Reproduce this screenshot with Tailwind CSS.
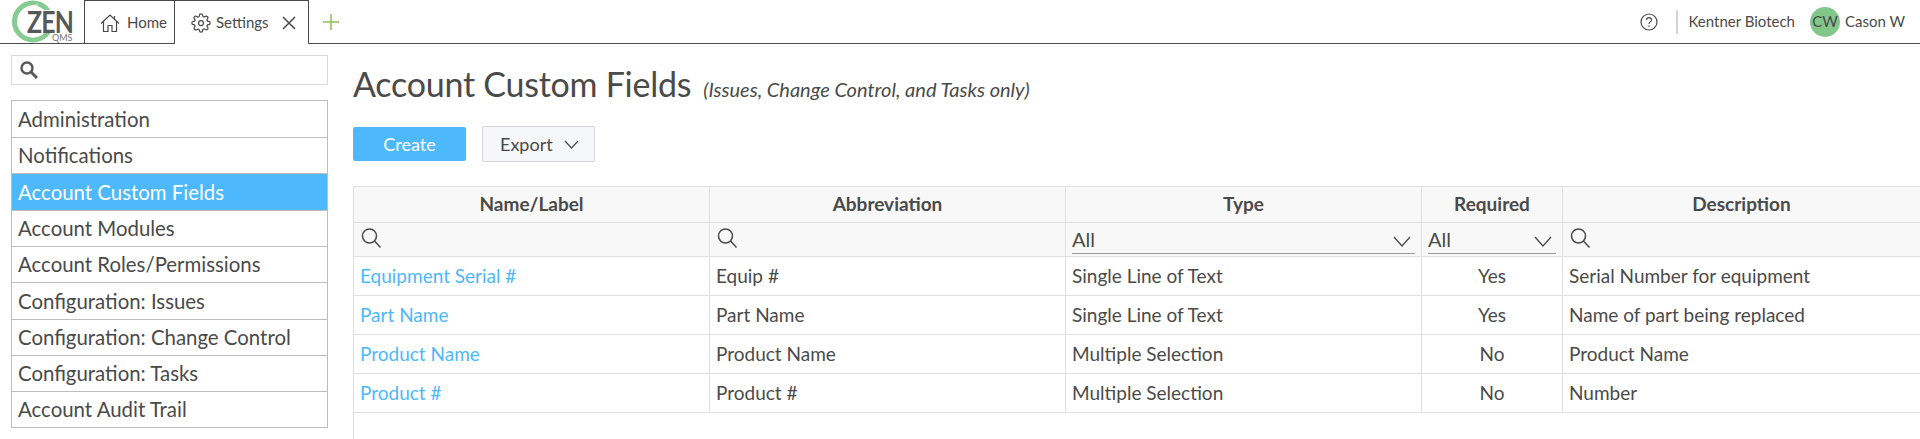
<!DOCTYPE html>
<html lang="en">
<head>
    <meta charset="UTF-8">
    <title>Account Custom Fields</title>
    <script src="https://cdn.jsdelivr.net/npm/@tailwindcss/browser@4"></script>
</head>
<body class="h-[439px] overflow-hidden bg-white font-['Lato',sans-serif] text-[#4a4a4a]">
    <!-- top bar -->
    <header class="flex h-[44px] items-stretch border-b border-[#4a4a4a]">
        <div class="relative w-[84px] shrink-0">
            <svg class="absolute left-[11px] top-0" width="44" height="43" viewBox="0 0 44 43" fill="none">
                <circle cx="22" cy="21.500" r="18.500" stroke="#86cb92" stroke-width="5"/>
                <path d="M7 26C5 14 15 5 27 5" stroke="#fff" stroke-width="1"/>
                <path d="M12 33c5 5 14 5 20 1" stroke="#fff" stroke-width="1"/>
            </svg>
            <span class="absolute left-[27px] top-[10px] h-[22px] origin-left scale-x-[0.8] bg-white text-[31px] leading-[22px] font-bold tracking-[-1px] text-[#55595a]">ZEN</span>
            <span class="absolute left-[52px] top-[33px] text-[9px] leading-[9px] text-[#777]">QMS</span>
        </div>
        <div class="flex h-[44px] w-[91px] items-center gap-[7px] border-x border-t border-[#4a4a4a] pl-[15px] text-[15px]">
            <svg width="20" height="20" viewBox="0 0 20 20" fill="none" stroke="#4a4a4a" stroke-width="1.200"><path d="M1 10.500 10 2l9 8.500M3.500 8.500V18.500h4.500v-6h4v6h4.500V8.500M14.500 3v3"/></svg>
            <span>Home</span>
        </div>
        <div class="flex h-[44px] w-[134px] items-center border-r border-t border-[#4a4a4a] bg-white pl-[16px] text-[15px]">
            <svg class="mr-[5px]" width="20" height="20" viewBox="0 0 24 24" fill="none" stroke="#4a4a4a" stroke-width="1.500" stroke-linejoin="round"><circle cx="12" cy="12" r="3"/><path d="M19.4 15a1.65 1.65 0 0 0 .33 1.82l.06.06a2 2 0 0 1 0 2.83 2 2 0 0 1-2.83 0l-.06-.06a1.65 1.65 0 0 0-1.82-.33 1.65 1.65 0 0 0-1 1.51V21a2 2 0 0 1-2 2 2 2 0 0 1-2-2v-.09A1.65 1.65 0 0 0 9 19.4a1.65 1.65 0 0 0-1.82.33l-.06.06a2 2 0 0 1-2.83 0 2 2 0 0 1 0-2.83l.06-.06a1.65 1.65 0 0 0 .33-1.82 1.65 1.65 0 0 0-1.51-1H3a2 2 0 0 1-2-2 2 2 0 0 1 2-2h.09A1.65 1.65 0 0 0 4.6 9a1.65 1.65 0 0 0-.33-1.82l-.06-.06a2 2 0 0 1 0-2.83 2 2 0 0 1 2.83 0l.06.06a1.65 1.65 0 0 0 1.82.33H9a1.65 1.65 0 0 0 1-1.51V3a2 2 0 0 1 2-2 2 2 0 0 1 2 2v.09a1.65 1.65 0 0 0 1 1.51 1.65 1.65 0 0 0 1.82-.33l.06-.06a2 2 0 0 1 2.83 0 2 2 0 0 1 0 2.83l-.06.06a1.65 1.65 0 0 0-.33 1.82V9a1.65 1.65 0 0 0 1.51 1H21a2 2 0 0 1 2 2 2 2 0 0 1-2 2h-.09a1.65 1.65 0 0 0-1.51 1z"/></svg>
            <span>Settings</span>
            <svg class="ml-[13px]" width="14" height="14" viewBox="0 0 14 14" stroke="#4a4a4a" stroke-width="1.500"><path d="M1 1l12 12M13 1 1 13"/></svg>
        </div>
        <div class="flex items-center pl-[14px]">
            <svg width="16" height="16" viewBox="0 0 16 16" stroke="#8cc152" stroke-width="1.500"><path d="M8 0v16M0 8h16"/></svg>
        </div>
        <div class="ml-auto flex items-center text-[15px]">
            <svg width="18" height="18" viewBox="0 0 18 18" fill="none" stroke="#4a4a4a" stroke-width="1.200"><circle cx="9" cy="9" r="8"/><path d="M6.500 7c0-3.300 5-3.300 5 0 0 2-2.500 1.800-2.500 4"/><path d="M9 12.500v1.500"/></svg>
            <div class="ml-[18px] h-[24px] w-[2px] bg-[#d4d4d4]"></div>
            <span class="ml-[10px]">Kentner Biotech</span>
            <div class="ml-[15px] flex h-[30px] w-[30px] items-center justify-center rounded-full bg-[#82c68a] text-[15px]">CW</div>
            <span class="ml-[5px] mr-[15px]">Cason W</span>
        </div>
    </header>

    <div class="flex">
        <!-- sidebar -->
        <aside class="ml-[11px] w-[317px] shrink-0 pt-[11px]">
            <div class="flex h-[30px] items-center border border-[#d9d9d9] pl-[7px]">
                <svg width="20" height="20" viewBox="0 0 20 20" fill="none" stroke="#5a5a5a"><circle cx="8" cy="8" r="5.500" stroke-width="2.500"/><path d="M12 12l6 6" stroke-width="3"/></svg>
            </div>
            <nav class="mt-[15px] border border-[#bdbdbd] pt-[1px] text-[20.400px]">
                <a class="flex h-[36px] items-center border-b border-[#bdbdbd] pl-[6px]">Administration</a>
                <a class="flex h-[36px] items-center border-b border-[#bdbdbd] pl-[6px]">Notifications</a>
                <a class="flex h-[37px] items-center border-b border-[#bdbdbd] bg-[#4db8fb] pl-[6px] text-white">Account Custom Fields</a>
                <a class="flex h-[36px] items-center border-b border-[#bdbdbd] pl-[6px]">Account Modules</a>
                <a class="flex h-[36px] items-center border-b border-[#bdbdbd] pl-[6px]">Account Roles/Permissions</a>
                <a class="flex h-[37px] items-center border-b border-[#bdbdbd] pl-[6px]">Configuration: Issues</a>
                <a class="flex h-[36px] items-center border-b border-[#bdbdbd] pl-[6px]">Configuration: Change Control</a>
                <a class="flex h-[36px] items-center border-b border-[#bdbdbd] pl-[6px]">Configuration: Tasks</a>
                <a class="flex h-[35px] items-center pl-[6px]">Account Audit Trail</a>
            </nav>
        </aside>

        <!-- main -->
        <main class="ml-[25px] min-w-0 flex-1">
            <div class="flex h-[82px] items-baseline pt-[15px]">
                <h1 class="text-[34px] font-normal leading-[50px] tracking-[-0.250px]">Account Custom Fields</h1>
                <span class="ml-[12px] text-[20px] italic">(Issues, Change Control, and Tasks only)</span>
            </div>
            <div class="flex items-center">
                <button class="h-[34px] w-[113px] rounded-[2px] bg-[#4db8fb] text-[18px] text-white">Create</button>
                <button class="ml-[16px] flex h-[36px] w-[113px] items-center rounded-[2px] border border-[#d6d6d6] bg-[#f5f7fa] pl-[17px] text-[18px]">
                    Export
                    <svg class="ml-[11px]" width="15" height="9" viewBox="0 0 15 9" fill="none" stroke="#4a4a4a" stroke-width="1.200"><path d="M1 1l6.500 7L14 1"/></svg>
                </button>
            </div>
            <div class="mt-[24px] h-[260px] border-l border-[#e0e0e0]">
                <table class="-ml-px w-[1567px] table-fixed border-collapse text-[19px]">
                    <colgroup>
                        <col class="w-[356px]"><col class="w-[356px]"><col class="w-[356px]"><col class="w-[141px]"><col class="w-[358px]">
                    </colgroup>
                    <thead class="bg-[#f8f8f8]">
                        <tr class="h-[36px] font-bold">
                            <th class="border border-[#e0e0e0]">Name/Label</th>
                            <th class="border border-[#e0e0e0]">Abbreviation</th>
                            <th class="border border-[#e0e0e0]">Type</th>
                            <th class="border border-[#e0e0e0]">Required</th>
                            <th class="border border-[#e0e0e0]">Description</th>
                        </tr>
                        <tr class="h-[34px]">
                            <td class="border border-[#e0e0e0] pl-[6px] pb-[3px]"><svg width="22" height="22" viewBox="0 0 22 22" fill="none" stroke="#4a4a4a" stroke-width="1.500"><circle cx="9.500" cy="9" r="7"/><path d="M14.500 14l6 6.500"/></svg></td>
                            <td class="border border-[#e0e0e0] pl-[6px] pb-[3px]"><svg width="22" height="22" viewBox="0 0 22 22" fill="none" stroke="#4a4a4a" stroke-width="1.500"><circle cx="9.500" cy="9" r="7"/><path d="M14.500 14l6 6.500"/></svg></td>
                            <td class="border border-[#e0e0e0] px-[6px] align-bottom"><div class="mb-[2px] flex h-[26px] items-center justify-between border-b border-[#9a9a9a] pb-[4px] pr-[4px] text-[20px]">All<svg class="mt-[6px]" width="18" height="11" viewBox="0 0 18 11" fill="none" stroke="#4a4a4a" stroke-width="1.300"><path d="M1 1l8 9 8-9"/></svg></div></td>
                            <td class="border border-[#e0e0e0] px-[6px] align-bottom"><div class="mb-[2px] flex h-[26px] items-center justify-between border-b border-[#9a9a9a] pb-[4px] pr-[4px] text-[20px]">All<svg class="mt-[6px]" width="18" height="11" viewBox="0 0 18 11" fill="none" stroke="#4a4a4a" stroke-width="1.300"><path d="M1 1l8 9 8-9"/></svg></div></td>
                            <td class="border border-[#e0e0e0] pl-[6px] pb-[3px]"><svg width="22" height="22" viewBox="0 0 22 22" fill="none" stroke="#4a4a4a" stroke-width="1.500"><circle cx="9.500" cy="9" r="7"/><path d="M14.500 14l6 6.500"/></svg></td>
                        </tr>
                    </thead>
                    <tbody>
                        <tr class="h-[39px]">
                            <td class="border border-[#e0e0e0] pl-[6px] text-[#4db8fb]">Equipment Serial #</td>
                            <td class="border border-[#e0e0e0] pl-[6px]">Equip #</td>
                            <td class="border border-[#e0e0e0] pl-[6px]">Single Line of Text</td>
                            <td class="border border-[#e0e0e0] text-center">Yes</td>
                            <td class="border border-[#e0e0e0] pl-[6px]">Serial Number for equipment</td>
                        </tr>
                        <tr class="h-[39px]">
                            <td class="border border-[#e0e0e0] pl-[6px] text-[#4db8fb]">Part Name</td>
                            <td class="border border-[#e0e0e0] pl-[6px]">Part Name</td>
                            <td class="border border-[#e0e0e0] pl-[6px]">Single Line of Text</td>
                            <td class="border border-[#e0e0e0] text-center">Yes</td>
                            <td class="border border-[#e0e0e0] pl-[6px]">Name of part being replaced</td>
                        </tr>
                        <tr class="h-[39px]">
                            <td class="border border-[#e0e0e0] pl-[6px] text-[#4db8fb]">Product Name</td>
                            <td class="border border-[#e0e0e0] pl-[6px]">Product Name</td>
                            <td class="border border-[#e0e0e0] pl-[6px]">Multiple Selection</td>
                            <td class="border border-[#e0e0e0] text-center">No</td>
                            <td class="border border-[#e0e0e0] pl-[6px]">Product Name</td>
                        </tr>
                        <tr class="h-[39px]">
                            <td class="border border-[#e0e0e0] pl-[6px] text-[#4db8fb]">Product #</td>
                            <td class="border border-[#e0e0e0] pl-[6px]">Product #</td>
                            <td class="border border-[#e0e0e0] pl-[6px]">Multiple Selection</td>
                            <td class="border border-[#e0e0e0] text-center">No</td>
                            <td class="border border-[#e0e0e0] pl-[6px]">Number</td>
                        </tr>
                    </tbody>
                </table>
            </div>
        </main>
    </div>
</body>
</html>
